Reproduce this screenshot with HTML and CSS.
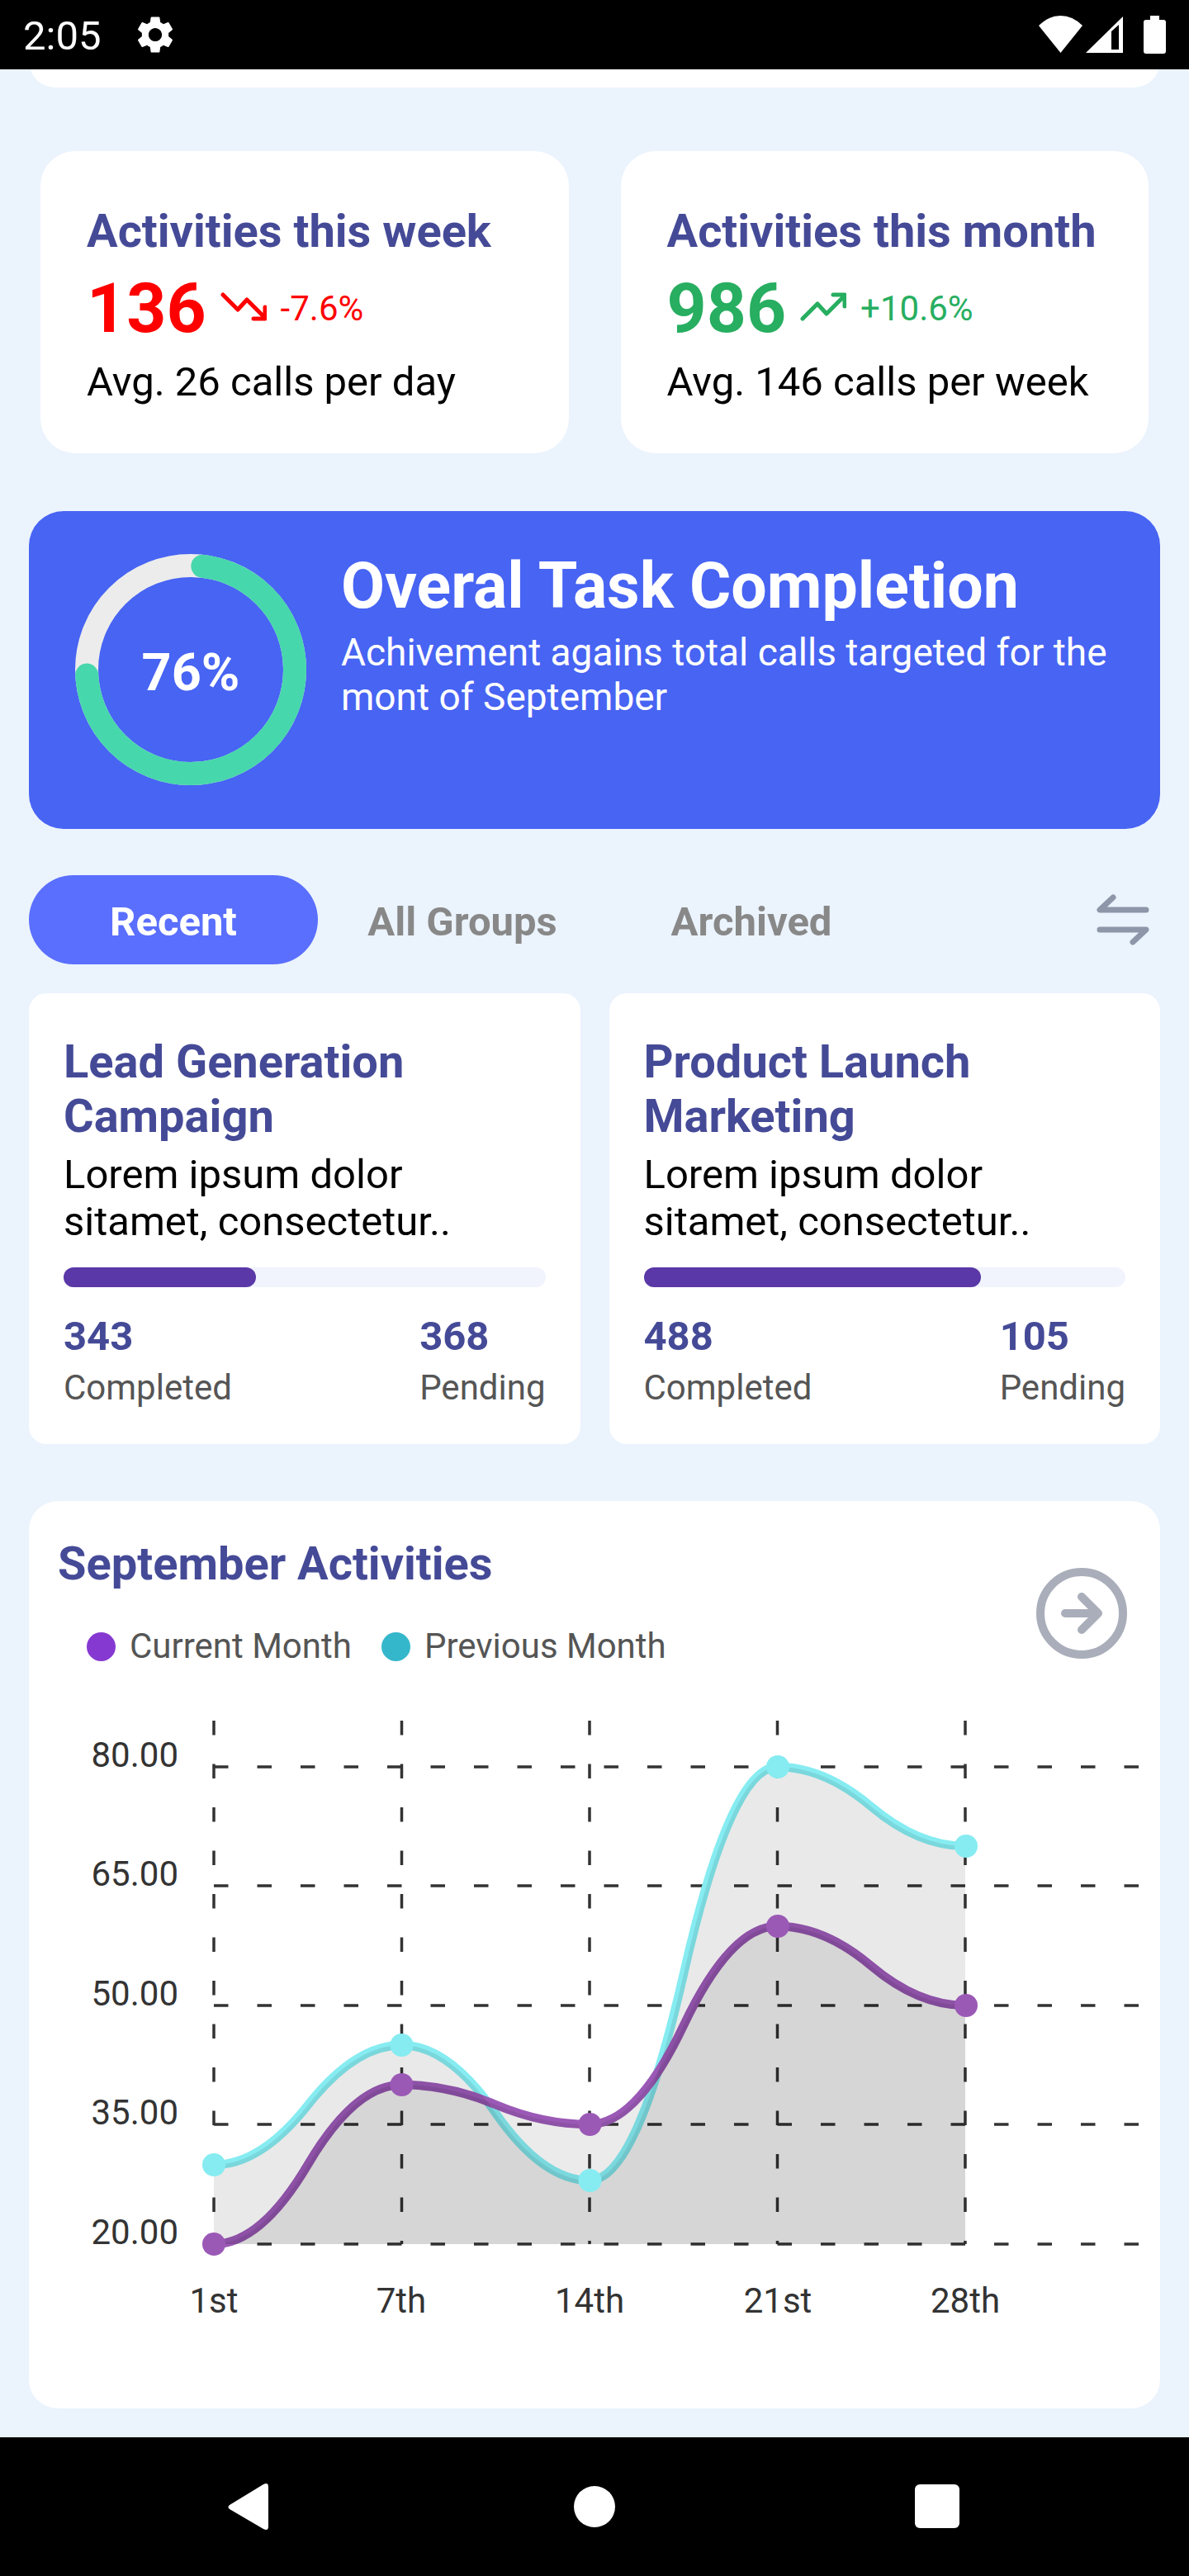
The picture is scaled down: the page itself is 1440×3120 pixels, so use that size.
FILE: index.html
```html
<!DOCTYPE html>
<html lang="en">
<head>
<meta charset="utf-8">
<meta name="viewport" content="width=device-width">
<title>Call activities</title>
<link rel="stylesheet" href="styles.css">
</head>
<body>
<header class="status">
  <span class="status-time">2:05</span>
  <svg class="status-gear" width="54" height="54" viewBox="0 0 24 24" aria-hidden="true"><path fill="#fff" d="M19.14 12.94c.04-.3.06-.61.06-.94 0-.32-.02-.64-.07-.94l2.03-1.58a.49.49 0 0 0 .12-.61l-1.92-3.32a.488.488 0 0 0-.59-.22l-2.39.96c-.5-.38-1.03-.7-1.62-.94l-.36-2.54a.484.484 0 0 0-.48-.41h-3.84c-.24 0-.43.17-.47.41l-.36 2.54c-.59.24-1.13.57-1.62.94l-2.39-.96c-.22-.08-.47 0-.59.22L2.74 8.87c-.12.21-.08.47.12.61l2.03 1.58c-.05.3-.09.63-.09.94s.02.64.07.94l-2.03 1.58a.49.49 0 0 0-.12.61l1.92 3.32c.12.22.37.29.59.22l2.39-.96c.5.38 1.03.7 1.62.94l.36 2.54c.05.24.24.41.48.41h3.84c.24 0 .44-.17.47-.41l.36-2.54c.59-.24 1.13-.56 1.62-.94l2.39.96c.22.08.47 0 .59-.22l1.92-3.32c.12-.22.07-.47-.12-.61l-2.01-1.58zM12 15.6c-1.98 0-3.6-1.62-3.6-3.6s1.62-3.6 3.6-3.6 3.6 1.62 3.6 3.6-1.62 3.6-3.6 3.6z"/></svg>
  <div class="status-icons" aria-hidden="true">
    <svg class="wifi" width="53" height="46" viewBox="0 0 53 46"><path fill="#fff" d="M26.500 45 0 12Q12 0 26.500 0T53 12Z"/></svg>
    <svg class="signal" width="45" height="46" viewBox="0 0 45 46"><path fill="#fff" fill-rule="evenodd" d="M0 45 45 1V45ZM31 19V41H40V11Z"/></svg>
    <svg width="27" height="46" viewBox="0 0 27 46"><path fill="#fff" d="M8 0H19V5H24a3 3 0 0 1 3 3V43a3 3 0 0 1-3 3H3a3 3 0 0 1-3-3V8a3 3 0 0 1 3-3H8Z"/></svg>
  </div>
</header>

<main class="content">
  <div class="scrolled"><div class="scrolled-card"></div></div>

  <section class="stats">
    <article class="stat">
      <h2 class="heading">Activities this week</h2>
      <div class="stat-row down">
        <strong class="stat-value">136</strong>
        <svg class="trend" width="56" height="40" viewBox="0 0 56 40" aria-hidden="true"><path d="M3 3 21 21 32 9 54 31M40 32H54V18"/></svg>
        <span class="stat-change">-7.6%</span>
      </div>
      <p class="stat-note">Avg. 26 calls per day</p>
    </article>
    <article class="stat">
      <h2 class="heading">Activities this month</h2>
      <div class="stat-row up">
        <strong class="stat-value">986</strong>
        <svg class="trend" width="56" height="40" viewBox="0 0 56 40" aria-hidden="true"><path d="M3 32 21 14 32 26 54 4M40 3H54V17"/></svg>
        <span class="stat-change">+10.6%</span>
      </div>
      <p class="stat-note">Avg. 146 calls per week</p>
    </article>
  </section>

  <section class="banner">
    <div class="ring">
      <svg width="280" height="280" viewBox="0 0 280 280" aria-hidden="true">
        <circle cx="140" cy="140" r="126" fill="none" stroke="#ececec" stroke-width="28"/>
        <path d="M154.300 14.800A126 126 0 1 1 14.200 146.600" fill="none" stroke="#47d7ac" stroke-width="28" stroke-linecap="round"/>
      </svg>
      <span class="ring-label">76%</span>
    </div>
    <div class="banner-text">
      <h2 class="banner-title">Overal Task Completion</h2>
      <p class="banner-note">Achivement agains total calls targeted for the mont of September</p>
    </div>
  </section>

  <nav class="tabs">
    <button class="tab tab-active" type="button">Recent</button>
    <button class="tab" type="button">All Groups</button>
    <button class="tab" type="button">Archived</button>
    <button class="icon-button swap" type="button" aria-label="Sort">
      <svg width="64" height="62" viewBox="0 0 64 62"><path d="M20 4 4 19H60M4 43H60L44 58" fill="none" stroke="#8e97a9" stroke-width="7" stroke-linecap="round" stroke-linejoin="round"/></svg>
    </button>
  </nav>

  <section class="groups">
    <article class="group">
      <h3 class="heading group-title">Lead Generation Campaign</h3>
      <p class="group-note">Lorem ipsum dolor sitamet, consectetur..</p>
      <div class="bar"><div class="bar-fill" style="width:40%"></div></div>
      <dl class="counts">
        <div class="count"><dd>343</dd><dt>Completed</dt></div>
        <div class="count"><dd>368</dd><dt>Pending</dt></div>
      </dl>
    </article>
    <article class="group">
      <h3 class="heading group-title">Product Launch Marketing</h3>
      <p class="group-note">Lorem ipsum dolor sitamet, consectetur..</p>
      <div class="bar"><div class="bar-fill" style="width:70%"></div></div>
      <dl class="counts">
        <div class="count"><dd>488</dd><dt>Completed</dt></div>
        <div class="count"><dd>105</dd><dt>Pending</dt></div>
      </dl>
    </article>
  </section>

  <section class="chart-card">
    <div class="chart-head">
      <div>
        <h2 class="heading">September Activities</h2>
        <ul class="legend">
          <li class="legend-item current">Current Month</li>
          <li class="legend-item previous">Previous Month</li>
        </ul>
      </div>
      <button class="icon-button open" type="button" aria-label="Open activities">
        <svg width="110" height="110" viewBox="0 0 110 110"><g fill="none" stroke="#a9aeba" stroke-width="10" stroke-linecap="round" stroke-linejoin="round"><circle cx="55" cy="55" r="50"/><path d="M35 55H75M55 35 75 55 55 75"/></g></svg>
      </button>
    </div>
    <svg class="chart" viewBox="0 0 1370 857" role="img" aria-label="September activities by day">
      <g class="grid">
        <path d="M224 80H1344M224 224H1344M224 369H1344M224 513H1344M224 658H1344"/>
        <path d="M224 24V658M451.500 24V658M679 24V658M906.500 24V658M1134 24V658"/>
      </g>
      <g class="axis axis-y">
        <text x="181" y="80">80.00</text>
        <text x="181" y="224">65.00</text>
        <text x="181" y="369">50.00</text>
        <text x="181" y="513">35.00</text>
        <text x="181" y="658">20.00</text>
      </g>
      <g class="axis axis-x">
        <text x="224" y="741">1st</text>
        <text x="451" y="741">7th</text>
        <text x="679" y="741">14th</text>
        <text x="907" y="741">21st</text>
        <text x="1134" y="741">28th</text>
      </g>
      <path class="line line-previous" d="M224 562Q281 562 338 489.500Q395 417 451.500 417Q508 417 565 499Q622 581 679 581Q736 581 793 330.500Q850 80 906.500 80Q963 80 1020 128Q1077 176 1134 176"/>
      <path class="line line-current" d="M224 658Q281 658 338 561.500Q395 465 451.500 465Q508 465 565 489Q622 513 679 513Q736 513 793 393Q850 273 906.500 273Q963 273 1020 321Q1077 369 1134 369"/>
      <path class="area" d="M224 562Q281 562 338 489.500Q395 417 451.500 417Q508 417 565 499Q622 581 679 581Q736 581 793 330.500Q850 80 906.500 80Q963 80 1020 128Q1077 176 1134 176V658H224Z"/>
      <path class="area area-current" d="M224 658Q281 658 338 561.500Q395 465 451.500 465Q508 465 565 489Q622 513 679 513Q736 513 793 393Q850 273 906.500 273Q963 273 1020 321Q1077 369 1134 369V658Z"/>
      <g class="dots-previous"><circle cx="224" cy="562" r="14"/><circle cx="451.500" cy="417" r="14"/><circle cx="679.500" cy="581" r="14"/><circle cx="907" cy="80" r="14"/><circle cx="1135" cy="176" r="14"/></g>
      <g class="dots-current"><circle cx="224" cy="658" r="14"/><circle cx="451.500" cy="465" r="14"/><circle cx="679.500" cy="513" r="14"/><circle cx="907" cy="273" r="14"/><circle cx="1135" cy="369" r="14"/></g>
    </svg>
  </section>
</main>

<nav class="system-nav" aria-label="System">
  <button class="icon-button" type="button" aria-label="Back"><svg width="60" height="60" viewBox="0 0 60 60"><path fill="#fff" d="M3 28 44 3Q50 0 50 6V54Q50 60 44 57L3 33Q0 30.500 3 28Z"/></svg></button>
  <button class="icon-button" type="button" aria-label="Home"><svg width="60" height="60" viewBox="0 0 60 60"><circle cx="30" cy="30" r="25" fill="#fff"/></svg></button>
  <button class="icon-button" type="button" aria-label="Recent apps"><svg width="60" height="60" viewBox="0 0 60 60"><rect x="3" y="3" width="54" height="53" rx="6" fill="#fff"/></svg></button>
</nav>
</body>
</html>
```
FILE: styles.css
```css
* { box-sizing: border-box; }
body, h2, h3, p, ul, dl, dd { margin: 0; padding: 0; }
body {
  display: flex;
  flex-direction: column;
  min-height: 100vh;
  background: #ebf3fd;
  color: #000;
  font-family: Roboto, "Liberation Sans", sans-serif;
  font-size: 49px;
}
svg { display: block; }
button { font: inherit; border: 0; padding: 0; background: none; cursor: pointer; }

.status {
  display: flex;
  align-items: center;
  height: 84px;
  padding: 0 28px;
  background: #000;
  color: #fff;
}
.status-time { line-height: 56px; padding-top: 4px; }
.status-gear { margin-left: 39px; }
.status-icons { display: flex; margin-left: auto; }
.signal { margin: 0 25px 0 4px; }

.content { flex: 1; padding: 0 35px 35px; }
.scrolled { overflow: hidden; }
.scrolled-card { height: 64px; margin-top: -42px; border-radius: 42px; background: #fff; }

.heading { color: #454a97; font-size: 56px; font-weight: 700; line-height: 74px; }

.stats {
  display: grid;
  grid-template-columns: 1fr 1fr;
  gap: 63px;
  margin: 77px 14px 70px;
}
.stat { padding: 60px 0 54px 56px; border-radius: 42px; background: #fff; white-space: nowrap; }
.stat-row { display: flex; align-items: center; line-height: 114px; }
.stat-value { font-size: 84px; }
.stat-change { font-size: 42px; }
.trend { margin: 0 17px; fill: none; stroke: currentColor; stroke-width: 5; stroke-linecap: round; stroke-linejoin: round; }
.down { color: #f00; }
.up { color: #27ae60; }
.stat-note { line-height: 64px; }

.banner {
  display: flex;
  gap: 42px;
  padding: 38px 56px 53px;
  border-radius: 42px;
  background: #4764f3;
  color: #fff;
}
.ring { display: grid; flex: none; place-items: center; margin-top: 14px; }
.ring > * { grid-area: 1 / 1; }
.ring-label { padding-top: 6px; font-size: 63px; font-weight: 700; }
.banner-title { font-size: 77px; line-height: 106px; }
.banner-note { font-size: 46px; line-height: 54px; }

.tabs { display: flex; align-items: center; margin: 56px 0 35px; }
.tab { width: 350px; height: 108px; padding-top: 4px; border-radius: 54px; color: #888; font-weight: 700; }
.tab-active { background: #5a6ffd; color: #fff; }
.swap { margin: 0 13px 0 auto; }

.groups { display: grid; grid-template-columns: 1fr 1fr; gap: 35px; }
.group { padding: 50px 42px 35px; border-radius: 21px; background: #fff; }
.group-title { max-width: 500px; line-height: 66px; }
.group-note { max-width: 500px; margin: 9px 0 27px; line-height: 57px; }
.bar { height: 24px; border-radius: 12px; background: #f1f3fd; }
.bar-fill { height: 100%; border-radius: 12px; background: #5a38a7; }
.counts { display: flex; justify-content: space-between; margin-top: 31px; }
.count dd { color: #454a97; font-weight: 700; line-height: 58px; }
.count dt { color: #555; font-size: 42px; line-height: 66px; }

.chart-card { margin-top: 69px; padding-top: 39px; border-radius: 35px; background: #fff; }
.chart-head { display: flex; justify-content: space-between; align-items: flex-start; padding: 0 40px 40px 35px; }
.legend { display: flex; gap: 36px; margin-top: 37px; padding-left: 35px; list-style: none; }
.legend-item { display: flex; align-items: center; gap: 17px; color: #555; font-size: 42px; line-height: 52px; }
.legend-item::before { content: ""; width: 35px; height: 35px; border-radius: 50%; background: currentColor; }
.legend-item.current::before { background: #8639d1; }
.legend-item.previous::before { background: #35b7cb; }
.open { margin-top: 42px; }

.chart { width: 100%; height: auto; }
.grid { fill: none; stroke: #333; stroke-width: 3.5; stroke-dasharray: 17.5 35; }
.axis { fill: #333; font-size: 42px; }
.axis-y { text-anchor: end; }
.axis-x { text-anchor: middle; }
.line { fill: none; stroke-width: 10.5; }
.line-previous { stroke: #86ecf1; }
.line-current { stroke: #9b59b6; }
.area { fill: #000; fill-opacity: .085; }
.area-current { fill-opacity: .077; }
.dots-previous { fill: #86ecf1; }
.dots-current { fill: #9b59b6; }

.system-nav {
  display: grid;
  grid-template-columns: repeat(3, 1fr);
  height: 168px;
  padding: 0 97px;
  background: #000;
}
.system-nav .icon-button { display: grid; place-items: center; }
```
